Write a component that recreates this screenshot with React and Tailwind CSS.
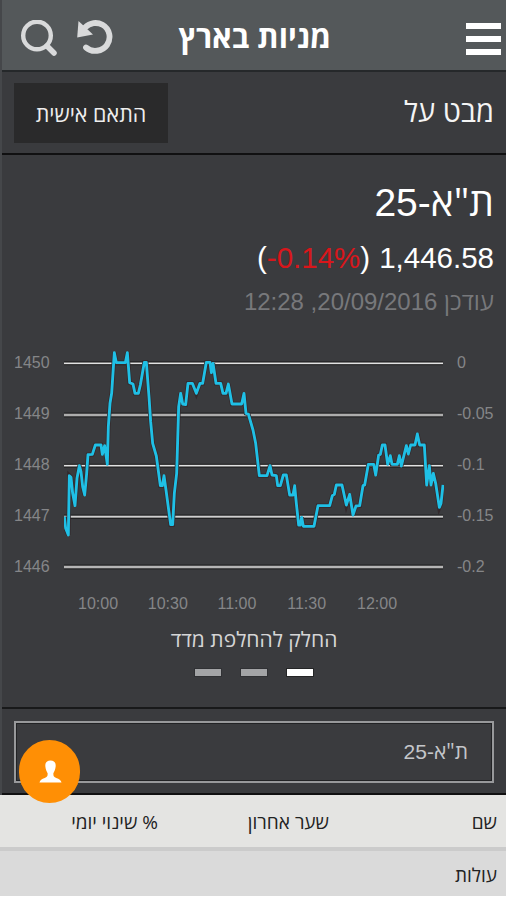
import React from 'react';

const leftTicks = ['1450', '1449', '1448', '1447', '1446'];
const rightTicks = ['0', '-0.05', '-0.1', '-0.15', '-0.2'];
const hours = ['10:00', '10:30', '11:00', '11:30', '12:00'];

const gridLines = [
  { y: 100, thick: 5, color: '#e2e2e2' },
  { y: 255, thick: 8, color: '#adadad' },
  { y: 407, thick: 5, color: '#e2e2e2' },
  { y: 560, thick: 6, color: '#cfcfcf' },
  { y: 711, thick: 8, color: '#b5b5b5' },
];

const points = [
  [193, 560], [197, 595], [205, 615], [208, 437], [213, 442], [218, 490], [225, 527], [231, 445],
  [238, 407], [243, 425], [248, 470], [254, 495], [260, 430], [264, 374], [277, 373], [286, 345],
  [303, 345], [307, 373], [314, 347], [322, 403], [325, 290], [330, 220], [335, 190], [343, 68],
  [349, 98], [376, 98], [382, 68], [389, 158], [399, 162], [405, 190], [415, 190], [421, 165],
  [433, 97], [439, 97], [447, 200], [452, 275], [458, 340], [469, 378], [481, 467], [487, 467],
  [492, 437], [498, 480], [512, 584], [518, 584], [523, 490], [530, 430], [536, 230], [542, 190],
  [548, 222], [557, 224], [564, 160], [577, 160], [589, 190], [600, 160], [608, 160], [619, 97],
  [630, 97], [634, 128], [639, 100], [648, 160], [662, 160], [669, 190], [678, 190], [685, 162],
  [696, 222], [725, 222], [732, 190], [738, 250], [745, 252], [759, 300], [767, 340], [778, 437],
  [801, 437], [810, 407], [816, 435], [829, 437], [833, 467], [841, 467], [850, 435], [859, 435],
  [869, 495], [879, 495], [884, 467], [889, 520], [896, 585], [901, 585], [905, 562], [910, 589],
  [942, 589], [954, 527], [989, 527], [997, 497], [1003, 493], [1009, 465], [1026, 465], [1039, 525],
  [1049, 493], [1059, 555], [1068, 528], [1079, 527], [1089, 467], [1094, 465], [1105, 403],
  [1121, 403], [1127, 435], [1136, 375], [1141, 373], [1147, 345], [1155, 345], [1163, 403],
  [1171, 377], [1176, 403], [1192, 403], [1198, 377], [1204, 408], [1219, 347], [1225, 372],
  [1232, 345], [1245, 345], [1252, 312], [1259, 345], [1273, 345], [1280, 465], [1288, 407],
  [1293, 465], [1300, 430], [1307, 460], [1318, 532], [1323, 520], [1329, 465],
];

const Header = () => (
  <header dir="ltr" className="flex h-[72px] items-center border-b-2 border-[#25282a] bg-[#54585a] pl-[18px] pt-1">
    <svg width="38" height="38" viewBox="0 0 38 38" fill="none" stroke="#d9dadb" className="mt-1">
      <circle cx="17" cy="15.5" r="13.8" strokeWidth="4.4" />
      <path d="M27 26 L34 33" strokeWidth="5.5" strokeLinecap="round" />
    </svg>
    <svg width="38" height="38" viewBox="0 0 38 38" fill="none" className="ml-[18px] mt-1">
      <path d="M9 7.5 C14 2.500 21 1.8 26.5 4.8 C34 9 35.5 18.500 31 25 C26.500 31.500 16 33 10 27.500" stroke="#d9dadb" strokeWidth="5.800" strokeLinecap="round" />
      <path d="M2.500 1 L1.200 17.500 L17 14.500 Z" fill="#d9dadb" />
    </svg>
    <h1 dir="rtl" className="ml-[65px] w-[152px] whitespace-nowrap pb-[2px] font-['Open_Sans',sans-serif] text-[30.5px] font-bold leading-none text-white">
      מניות בארץ
    </h1>
    <div className="ml-auto mr-[5px] mt-1 flex flex-col gap-[7px]">
      <span className="h-[6px] w-[35px] bg-white" />
      <span className="h-[6px] w-[35px] bg-white" />
      <span className="h-[6px] w-[35px] bg-white" />
    </div>
  </header>
);

const Chart = () => {
  const line = points.map((p) => p.join(',')).join(' ');
  return (
    <div dir="ltr" className="text-[16px] leading-4 text-[#858688]">
      <div className="flex h-[230px]">
        <div className="flex w-[62px] flex-col justify-between pl-3 pt-[10px]">
          {leftTicks.map((t) => (
            <span key={t}>{t}</span>
          ))}
        </div>
        <svg width="380" height="230" viewBox="192 45 1140 690" fill="none">
          {gridLines.map((g) => (
            <g key={g.y}>
              <rect x="192" y={g.y - g.thick / 2 - 3} width="1137" height={g.thick + 6} fill="#161617" />
              <rect x="192" y={g.y - g.thick / 2} width="1137" height={g.thick} fill={g.color} />
            </g>
          ))}
          <polyline points={line} stroke="#33292c" strokeWidth="13" />
          <polyline points={line} stroke="#1fc0e6" strokeWidth="8.500" strokeLinejoin="round" />
        </svg>
        <div className="flex flex-col justify-between pl-[13px] pt-[10px]">
          {rightTicks.map((t) => (
            <span key={t}>{t}</span>
          ))}
        </div>
      </div>
      <div className="mt-[21px] flex gap-[29.75px] pl-[76px]">
        {hours.map((h) => (
          <span key={h} className="w-10 whitespace-nowrap">{h}</span>
        ))}
      </div>
    </div>
  );
};

export default function App() {
  return (
    <div dir="rtl" className="relative h-[900px] w-[506px] overflow-hidden bg-white font-['Liberation_Sans',Arial,sans-serif]">
      <div className="h-[795px] border-l-2 border-[#45474a] bg-[#3a3b3e]">
        <Header />

        <div className="flex h-[83px] items-center justify-between border-b-2 border-[#101011] pl-3 pr-3 font-['Open_Sans',sans-serif]">
          <h2 className="pb-[4px] text-[29px] leading-none text-[#f4f4f4]">מבט על</h2>
          <button className="h-[60px] w-[154px] bg-[#2a2a2b] pt-[3px] text-[21.5px] text-[#eeeeee]">
            התאם אישית
          </button>
        </div>

        <section className="flex h-[554px] flex-col border-b-2 border-[#18191a]">
          <div className="h-[190px] pr-3 pt-[26px]">
            <div className="whitespace-nowrap text-[39px] leading-[40px] text-white">
              <span className="font-['Open_Sans',sans-serif] leading-none">ת"א</span>-25
            </div>
            <div className="mt-[17px] flex gap-[9px] text-[29.5px] leading-[36px] text-white">
              <span>1,446.58</span>
              <span dir="ltr">
                (<span className="text-[#d8161b]">-0.14%</span>)
              </span>
            </div>
            <div className="mt-[12px] text-[24px] leading-[28px] text-[#77787b]">
              <span className="font-['Open_Sans',sans-serif] leading-none">עודכן</span> 20/09/2016, 12:28
            </div>
          </div>
          <Chart />
          <div className="mt-[15px] text-center font-['Open_Sans',sans-serif] text-[21px] leading-6 text-[#d5d5d6]">
            החלק להחלפת מדד
          </div>
          <div className="mt-[18px] flex justify-center gap-5">
            <span className="h-[7px] w-[26px] bg-white outline outline-[#242526]" />
            <span className="h-[7px] w-[26px] bg-[#a3a4a6] outline outline-[#303134]" />
            <span className="h-[7px] w-[26px] bg-[#a3a4a6] outline outline-[#303134]" />
          </div>
        </section>

        <div className="h-[86px] border-b-2 border-[#101011] px-3 pt-3">
          <div className="flex h-[62px] items-center border-2 border-[#98999b] pr-6 text-[#c4c6ca] shadow-[inset_0_0_0_1px_#222325]">
            <div className="text-[21px]">
              <span className="font-['Open_Sans',sans-serif] leading-none">ת"א</span>-25
            </div>
          </div>
        </div>
      </div>

      <div className="flex h-[56px] items-center border-b-4 border-[#cbcbcb] bg-[#e4e4e2] pr-[9px] pt-[2px] font-['Open_Sans',sans-serif] text-[19px] text-[#222]">
        <span className="w-[168px]">שם</span>
        <span className="w-[171px]">שער אחרון</span>
        <span>% שינוי יומי</span>
      </div>
      <div className="flex h-[45px] items-center bg-[#dadada] pr-[9px] pt-[3px] font-['Open_Sans',sans-serif] text-[19px] text-[#222]">
        עולות
      </div>

      {/* floating profile button */}
      <button className="absolute left-[19px] top-[740px] flex h-[63px] w-[61px] items-center justify-center rounded-full bg-[#ff8f05]">
        <svg width="23" height="23" viewBox="0 0 24 24" fill="#fff" className="ml-[1px]">
          <path d="M12 .5 C16 .5 17.600 3 17.400 6.500 C17.200 9.500 16 12 15 13.800 C14.800 16.800 15.500 17.600 18 18.700 C21 19.900 23 20.800 23.500 23.500 H.5 C1 20.800 3 19.900 6 18.700 C8.500 17.600 9.200 16.800 9 13.800 C8 12 6.800 9.500 6.600 6.500 C6.400 3 8 .5 12 .5 Z" />
        </svg>
      </button>
    </div>
  );
}
